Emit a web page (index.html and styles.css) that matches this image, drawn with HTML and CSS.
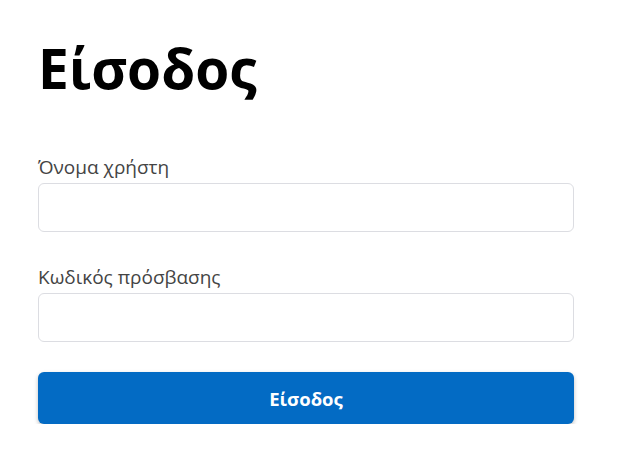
FILE: index.html
```html
<!DOCTYPE html>
<html lang="el">
<head>
<meta charset="utf-8">
<title>Είσοδος</title>
<link rel="stylesheet" href="styles.css">
</head>
<body>
<main class="login">
  <h1 class="title">Είσοδος</h1>
  <form class="form">
    <div class="field">
      <label class="label" for="user">Όνομα χρήστη</label>
      <input class="input" id="user" type="text">
    </div>
    <div class="field">
      <label class="label" for="pass">Κωδικός πρόσβασης</label>
      <input class="input" id="pass" type="password">
    </div>
    <button class="btn" type="button">Είσοδος</button>
  </form>
</main>
</body>
</html>
```
FILE: styles.css
```css
* { box-sizing: border-box; }
html, body { margin: 0; padding: 0; background: #fff; }
body { font-family: "Open Sans", "Noto Sans", sans-serif; }
.login {
  width: 536px;
  margin-left: 38px;
  padding-top: 35px;
}
.title {
  margin: 0;
  font-size: 55px;
  line-height: 66px;
  font-weight: 700;
  color: #000;
}
.form {
  display: flex;
  flex-direction: column;
  gap: 33px;
  margin-top: 54px;
}
.field {
  display: flex;
  flex-direction: column;
  gap: 4px;
}
.label {
  font-size: 19px;
  line-height: 24px;
  color: #444;
}
.input {
  height: 49px;
  border: 1px solid #dcdde2;
  border-radius: 6px;
  background: #fff;
  font: inherit;
  padding: 0 12px;
}
.btn {
  margin-top: -3px;
  height: 52px;
  border: none;
  border-radius: 6px;
  background: #036bc4;
  color: #fff;
  font: inherit;
  font-size: 18.5px;
  font-weight: 700;
  box-shadow: 0 2px 4px rgba(0,0,0,0.25);
}
```
